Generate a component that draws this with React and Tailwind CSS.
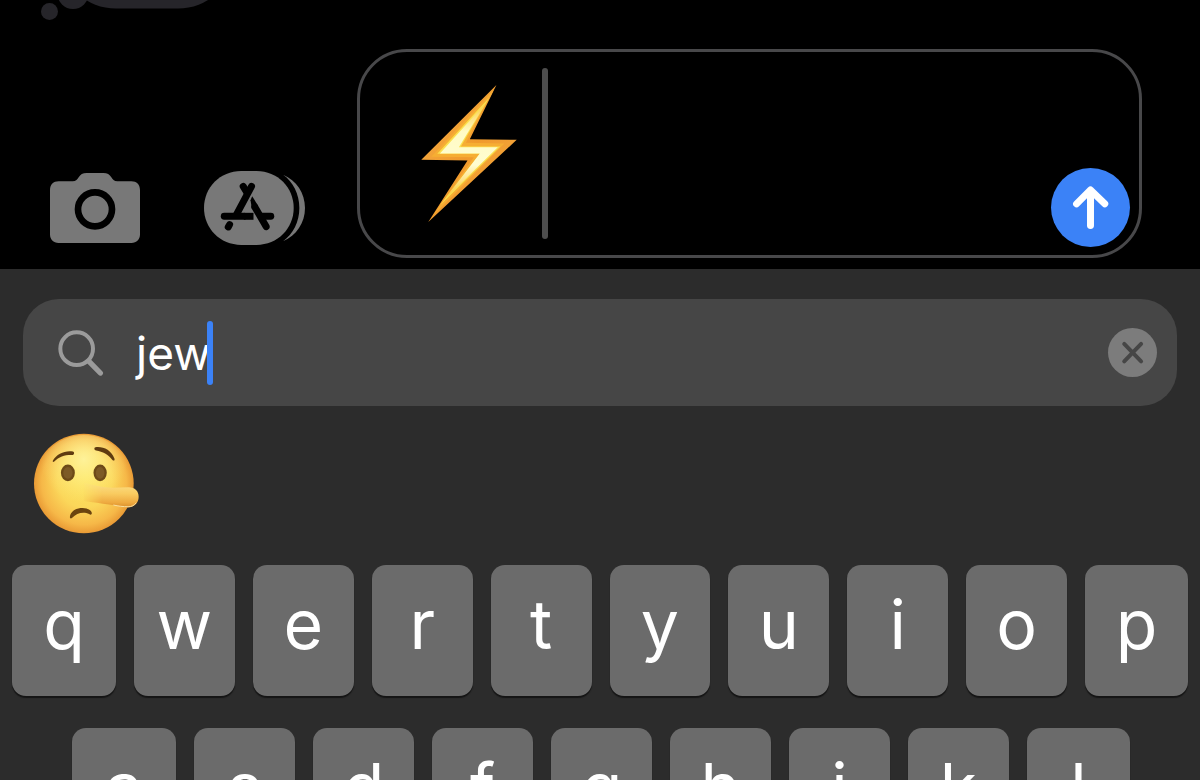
import React from "react";

const TOP_ROW = ["q", "w", "e", "r", "t", "y", "u", "i", "o", "p"];
const HOME_ROW = ["a", "s", "d", "f", "g", "h", "j", "k", "l"];

const BubbleTail = () => (
  <svg className="block h-5 w-60" viewBox="0 0 240 20" fill="#26252a" aria-hidden="true">
    <rect x="62" y="-92" width="170" height="100.5" rx="54" />
    <circle cx="73" cy="-6.5" r="15.5" />
    <circle cx="49.5" cy="11.5" r="8.5" />
  </svg>
);

const CameraIcon = () => (
  <svg className="h-[70px] w-[90px]" viewBox="0 0 270 210" aria-hidden="true">
    <path
      fill="#787878"
      d="M26 25H68C78 25 82 20 86 13C91 4 98 0 110 0H160C172 0 179 4 184 13C188 20 192 25 202 25H244C260 25 270 35 270 51V184C270 200 260 210 244 210H26C10 210 0 200 0 184V51C0 35 10 25 26 25Z"
    />
    <circle cx="135" cy="109" r="51" fill="none" stroke="#000" strokeWidth="20" />
  </svg>
);

const AppsIcon = () => (
  <svg className="h-[74px] w-[101px]" viewBox="0 0 304 222" fill="none" aria-hidden="true">
    <path
      fill="#787878"
      d="M112 0H158C222 0 270 50 270 111S222 222 158 222H112C48 222 0 172 0 111S48 0 112 0Z"
    />
    <path
      fill="#787878"
      d="M238 11C278 28 304 66 304 111S278 194 238 211C268 190 287 153 287 111S268 32 238 11Z"
    />
    <g stroke="#000" strokeWidth="21" strokeLinecap="round">
      <path d="M143 46L98 130" />
      <path d="M118 46L129 64" />
      <path d="M61 136H120" />
      <path d="M73 168L77 161" />
    </g>
    <path d="M120 136H149" stroke="#000" strokeWidth="21" />
    <g stroke="#000" strokeWidth="21" strokeLinecap="round">
      <path d="M153 108L187 167" />
      <path d="M176 136H201" />
    </g>
    <path d="M145 76L140 88L144 113L163 104Z" fill="#000" />
  </svg>
);

const BoltEmoji = () => (
  <svg className="h-[137px] w-24 shrink-0" viewBox="0 0 287 412" role="img" aria-label="High voltage">
    <defs>
      <linearGradient id="boltEdge" x1="0" y1="0" x2="1" y2="1">
        <stop offset="0" stopColor="#f6b04a" />
        <stop offset="0.5" stopColor="#f09a2c" />
        <stop offset="1" stopColor="#f5ab45" />
      </linearGradient>
      <linearGradient id="boltCore" x1="0" y1="0" x2="0" y2="1">
        <stop offset="0" stopColor="#fbc93f" />
        <stop offset="0.3" stopColor="#fffbc4" />
        <stop offset="0.65" stopColor="#fffdd0" />
        <stop offset="1" stopColor="#fbc435" />
      </linearGradient>
    </defs>
    <path fill="url(#boltEdge)" d="M226 0L146 163L287 165L21 412L139 227L0 225Z" />
    <path fill="#f6ae33" d="M218 14L134 174L250 176L36 392L158 217L30 216Z" />
    <path fill="#fbe04e" d="M204 38L119 185L238 185L56 362L176 207L48 207Z" />
    <path fill="url(#boltCore)" d="M194 54L113 187L230 187L74 340L176 206L56 206Z" />
  </svg>
);

const LyingFaceEmoji = () => (
  <svg className="h-[101px] w-[105px]" viewBox="0 0 316 302" aria-hidden="true">
    <defs>
      <radialGradient id="face" cx="0.5" cy="0.5" r="0.5" fx="0.52" fy="0.42">
        <stop offset="0" stopColor="#fde45c" />
        <stop offset="0.55" stopColor="#fbd75a" />
        <stop offset="0.85" stopColor="#f6b848" />
        <stop offset="1" stopColor="#e99a35" />
      </radialGradient>
      <radialGradient id="shine" cx="0.5" cy="0.25" r="0.45">
        <stop offset="0" stopColor="#fff6a4" stopOpacity="0.85" />
        <stop offset="1" stopColor="#fff08a" stopOpacity="0" />
      </radialGradient>
      <linearGradient id="nose" x1="0" y1="0" x2="0" y2="1">
        <stop offset="0" stopColor="#fbdf88" />
        <stop offset="0.45" stopColor="#f9cb60" />
        <stop offset="0.8" stopColor="#eeaa40" />
        <stop offset="1" stopColor="#d98e2c" />
      </linearGradient>
      <linearGradient id="noseFade" x1="0" y1="0" x2="1" y2="0">
        <stop offset="0" stopColor="#fff" stopOpacity="0" />
        <stop offset="0.35" stopColor="#fff" />
      </linearGradient>
      <mask id="noseMask">
        <rect x="145" y="140" width="171" height="100" fill="url(#noseFade)" />
      </mask>
    </defs>
    <circle cx="150" cy="151" r="150" fill="url(#face)" />
    <circle cx="150" cy="151" r="146" fill="url(#shine)" />
    <ellipse cx="102" cy="119" rx="21" ry="25" fill="#6d4a18" />
    <ellipse cx="102" cy="119" rx="14" ry="18" fill="#7d5a26" />
    <ellipse cx="199" cy="119" rx="20" ry="25" fill="#6d4a18" />
    <ellipse cx="199" cy="119" rx="13" ry="18" fill="#7d5a26" />
    <path fill="#5f3b10" d="M57 82C68 62 94 51 117 55C122 56 122 64 117 65C94 64 76 69 61 85C58 88 55 86 57 82Z" />
    <path fill="#5f3b10" d="M185 42C208 39 232 50 242 76C244 82 240 84 236 80C223 64 207 55 187 52C181 51 180 43 185 42Z" />
    <path fill="#6b430f" d="M108 252C109 235 127 225 146 225C161 225 173 232 174 240C174 245 170 246 166 243C149 234 128 240 115 254C111 258 108 256 108 252Z" />
    <g mask="url(#noseMask)">
      <path
        fill="url(#nose)"
        d="M150 148C178 156 205 163 236 164L285 162C304 162 315 174 315 191C315 209 302 223 283 223C252 219 205 211 150 204Z"
      />
      <path fill="none" stroke="#fae0a0" strokeWidth="3" strokeLinecap="round" d="M240 216C254 219 268 221 283 221C294 221 302 217 307 210" />
    </g>
  </svg>
);

const SearchIcon = () => (
  <svg className="h-[46px] w-[46px] shrink-0" viewBox="0 0 138 138" fill="none" stroke="#9b9b9b" aria-hidden="true">
    <circle cx="56" cy="56" r="49" strokeWidth="12" />
    <path d="M93 94L127 129" strokeWidth="16" strokeLinecap="round" />
  </svg>
);

const Composer = () => (
  <div className="mt-[29px] flex items-end pb-[11px] pl-[50px] pr-[58px]">
    <button type="button" aria-label="Camera" className="mb-[15px] shrink-0">
      <CameraIcon />
    </button>
    <button type="button" aria-label="Apps" className="mb-[13px] ml-16 shrink-0">
      <AppsIcon />
    </button>
    <div className="ml-[52px] flex h-[209px] min-w-0 flex-1 items-center rounded-[50px] border-[3px] border-[#48484a] pl-[61px] pr-[9px]">
      <BoltEmoji />
      <span className="ml-[25px] h-[171px] w-[6px] shrink-0 rounded-full bg-[#4d4d4d]" />
      <textarea aria-label="Message" className="h-[171px] min-w-0 flex-1 resize-none bg-transparent text-white outline-none" />
      <button
        type="button"
        aria-label="Send"
        className="mb-2 h-[79px] w-[79px] shrink-0 self-end rounded-full bg-[#3b82f7]"
      >
        <svg viewBox="0 0 238 238" fill="none" stroke="#fff" strokeWidth="21" strokeLinecap="round" strokeLinejoin="round" aria-hidden="true">
          <path d="M119 67V173M77 108L119 66L162 108" />
        </svg>
      </button>
    </div>
  </div>
);

const SearchBar = () => (
  <div className="mx-[23px] flex h-[107px] items-center rounded-[36px] bg-[#464646] pl-[35px] pr-5">
    <label htmlFor="emoji-search" aria-label="Search emoji">
      <SearchIcon />
    </label>
    <div className="ml-7 flex min-w-0 flex-1 items-center">
      <input
        id="emoji-search"
        type="text"
        defaultValue="jew"
        className="field-sizing-content h-16 bg-transparent indent-1 text-[46px] leading-[64px] text-white outline-none"
      />
      <span className="-ml-1 h-16 w-[6px] shrink-0 rounded-full bg-[#3b82f7]" />
    </div>
    <button type="button" aria-label="Clear search" className="h-[49px] w-[49px] shrink-0 rounded-full bg-[#7c7c7c]">
      <svg viewBox="0 0 148 148" fill="none" stroke="#464646" strokeWidth="12" strokeLinecap="round" aria-hidden="true">
        <path d="M49 48L100 101M100 48L49 101" />
      </svg>
    </button>
  </div>
);

const Key = ({ label }) => (
  <button
    type="button"
    className="flex h-[131px] min-w-0 flex-1 items-center justify-center rounded-[14px] bg-[#6b6b6b] pb-[14px] text-[68px] leading-[84px] font-normal text-white shadow-[0_2px_1px_#151515] first:w-[104px] first:flex-none last:w-[103px] last:flex-none"
  >
    {label}
  </button>
);

export default function App() {
  return (
    <div className="flex h-screen flex-col overflow-hidden bg-black font-['Inter','Noto_Sans',sans-serif]">
      <BubbleTail />
      <Composer />
      <div className="min-h-0 flex-1 overflow-hidden bg-[#2c2c2c] pt-[30px]">
        <SearchBar />
        <button type="button" aria-label="Lying face" className="mt-[27px] ml-[34px] block">
          <LyingFaceEmoji />
        </button>
        <div className="mt-[31px] flex gap-[18px] px-3">
          {TOP_ROW.map((key) => (
            <Key key={key} label={key} />
          ))}
        </div>
        <div className="mt-8 flex gap-[18px] pr-[70px] pl-[72px]">
          {HOME_ROW.map((key) => (
            <Key key={key} label={key} />
          ))}
        </div>
      </div>
    </div>
  );
}
